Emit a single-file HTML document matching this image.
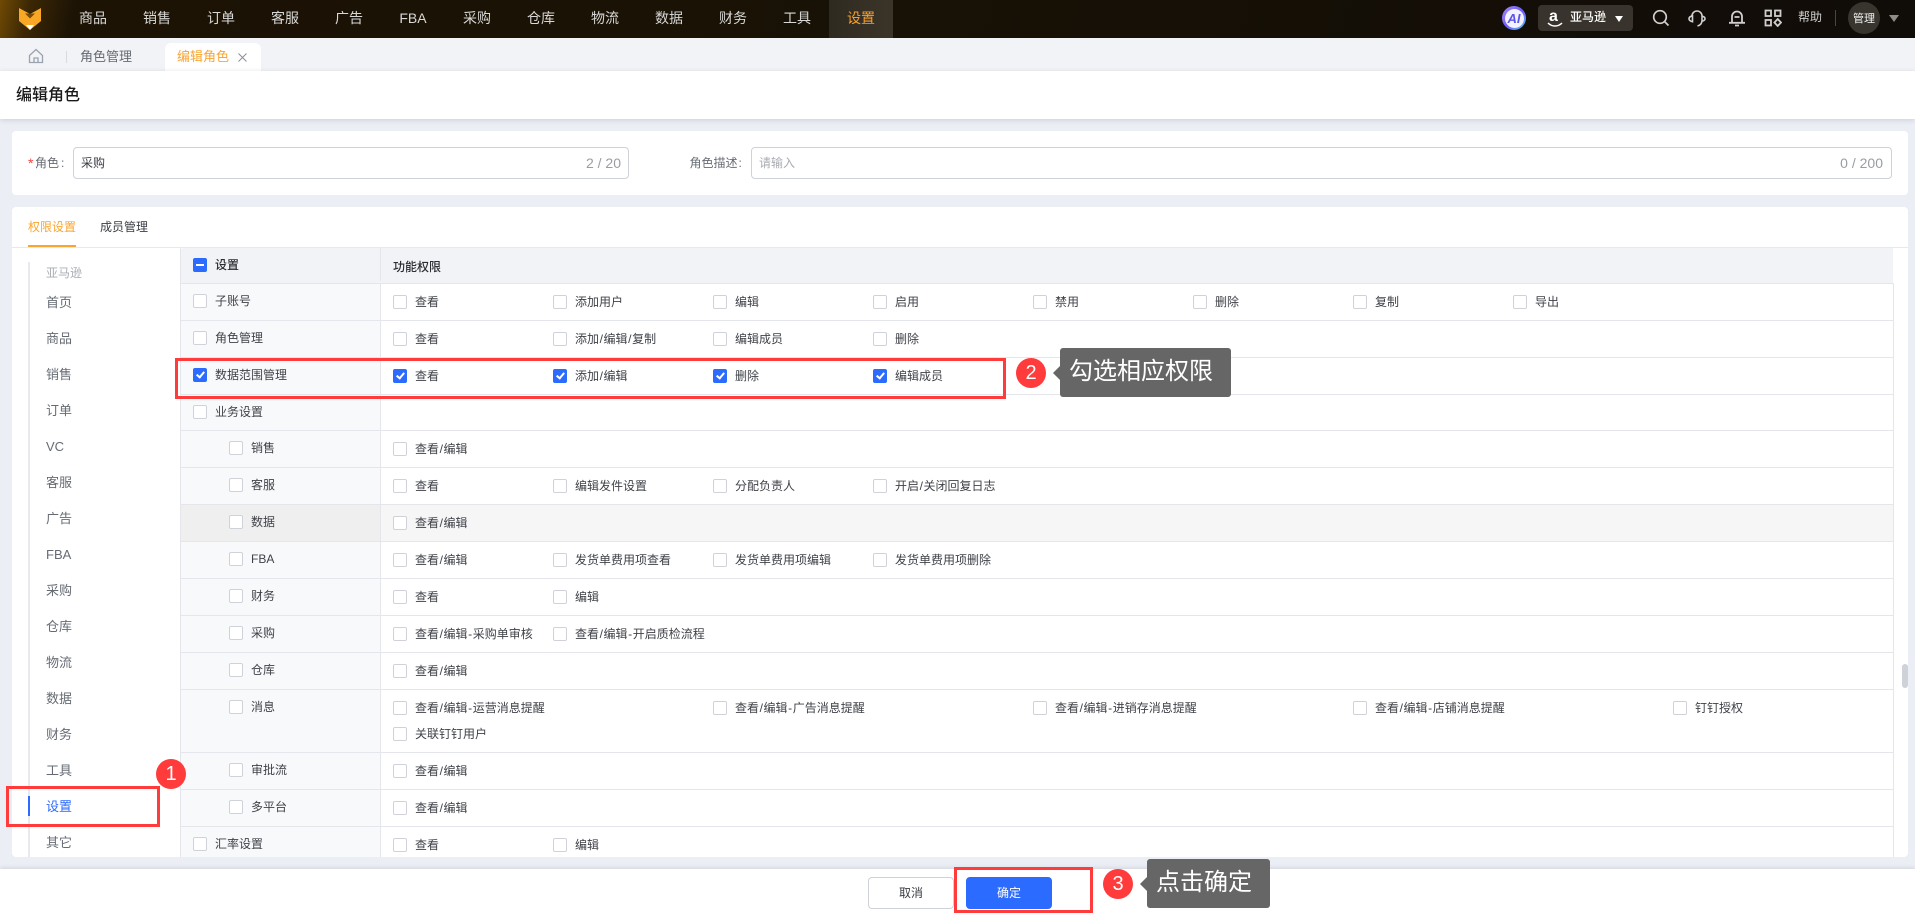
<!DOCTYPE html>
<html lang="zh">
<head>
<meta charset="utf-8">
<title>编辑角色</title>
<style>
html,body{margin:0;padding:0}
body{width:1915px;height:915px;position:relative;overflow:hidden;background:#eceef5;font-family:"Liberation Sans","Noto Sans CJK SC",sans-serif;font-size:12px;color:#3a3d44}
div,span,b,label,i,svg{position:absolute}
s{text-decoration:none;padding:0 .6px}
.t{white-space:nowrap;line-height:16px}
.h{left:0;top:0;width:1915px;height:38px;background:linear-gradient(102deg,#704a04 0,#3b2705 30px,#1c1305 75px,#181105 900px,#100c08 100%)}
.n{top:0;width:64px;height:38px;line-height:36px;text-align:center;color:#d8d8d6;font-size:14px}
.w{background:#fff}
.l{height:1px;left:180px;width:1713px;background:#e5e6ec}
.v{width:1px;background:#e5e6ec}
.s{left:46px;margin-top:1px;font-size:13px;color:#666b73;white-space:nowrap;line-height:16px}
.i{white-space:nowrap;line-height:14px;padding-left:22px;height:14px;color:#3f4248;font-size:12px}
.i i{left:0;top:0;width:12px;height:12px;border:1px solid #cfd2d8;border-radius:2px;background:#fff}
.k i{background:#2b6bff;border-color:#2b6bff}
.k i:after{content:"";position:absolute;left:3.5px;top:1px;width:3px;height:6px;border:solid #fff;border-width:0 2px 2px 0;transform:rotate(40deg)}
.r{border:3px solid #ff3b3b;box-sizing:border-box;z-index:5}
.b{width:30px;height:30px;border-radius:50%;background:#ff3b3b;color:#fff;text-align:center;line-height:30px;font-size:20px;z-index:6}
.p{height:49px;background:#666;border-radius:3px;color:#fff;font-size:24px;line-height:48px;z-index:6;white-space:nowrap;box-sizing:border-box}
.p:before{content:"";position:absolute;left:-7px;top:18px;border:7px solid transparent;border-left:0;border-right-color:#666}
</style>
</head>
<body>
<div class="h"></div>
<svg style="left:0;top:0" width="60" height="38" viewBox="0 0 60 38"><path d="M19 8L30 14L41 8V21L30 30L19 21Z" fill="#f9a825"/><path d="M25 13.5H35L30 18.5Z" fill="#7a4a08"/><path d="M26 25H34L30 30Z" fill="#fff"/></svg>
<div class="n" style="left:61px">商品</div>
<div class="n" style="left:125px">销售</div>
<div class="n" style="left:189px">订单</div>
<div class="n" style="left:253px">客服</div>
<div class="n" style="left:317px">广告</div>
<div class="n" style="left:381px">FBA</div>
<div class="n" style="left:445px">采购</div>
<div class="n" style="left:509px">仓库</div>
<div class="n" style="left:573px">物流</div>
<div class="n" style="left:637px">数据</div>
<div class="n" style="left:701px">财务</div>
<div class="n" style="left:765px">工具</div>
<div class="n" style="left:829px;background:linear-gradient(90deg,#2f2a20,#3b3429);color:#f9a02b">设置</div>

<div style="left:1502px;top:6px;width:24px;height:24px;border-radius:50%;background:linear-gradient(135deg,#a78bfa,#6d5cf5 50%,#58c8f5);"></div>
<div style="left:1504.5px;top:8.5px;width:19px;height:19px;border-radius:50%;background:#f4f2ff"></div>
<b style="left:1504.5px;top:8.5px;width:19px;text-align:center;line-height:19px;font-size:13px;font-style:italic;color:#5a55ea">AI</b>
<div style="left:1538px;top:5px;width:95px;height:26px;border-radius:4px;background:#38332c"></div>
<b style="left:1549px;top:7px;font-size:16px;line-height:20px;color:#fff;font-family:'Liberation Sans',sans-serif">a</b>
<svg style="left:1547px;top:22px" width="16" height="6" viewBox="0 0 16 6"><path d="M1 1C5 5 11 5 15 1" fill="none" stroke="#fff" stroke-width="1.5"/></svg>
<div class="t" style="left:1570px;top:9px;color:#fff;font-size:12px;font-weight:500">亚马逊</div>
<svg style="left:1615px;top:16px" width="8" height="6"><path d="M0 0H8L4 6Z" fill="#fff"/></svg>
<svg style="left:1652px;top:9px" width="18" height="18" viewBox="0 0 18 18" fill="none" stroke="#cfcfcf" stroke-width="1.700"><circle cx="8" cy="8" r="6.300"/><path d="M12.500 12.500L16.500 16.500"/></svg>
<svg style="left:1688px;top:9px" width="18" height="18" viewBox="0 0 18 18" fill="none" stroke="#cfcfcf" stroke-width="1.600"><path d="M4 7A5 5 0 0 1 14 7V11.500C14 14.500 12.500 16.200 9.500 17"/><path d="M4.500 6.800C2.500 7.300 1 8.300 1 9.700S2.500 12.200 4.500 12.700Z"/><path d="M14 7.200C16 7.600 17 8.500 17 9.700S16 11.700 14 12.100"/></svg>
<svg style="left:1728px;top:9px" width="18" height="19" viewBox="0 0 18 19" fill="none" stroke="#cfcfcf" stroke-width="1.800"><path d="M4 13V7.500A5 5 0 0 1 14 7.500V13M1 13.800H17M6.500 8H11.500M7 16.500H11"/></svg>
<svg style="left:1764px;top:9px" width="18" height="18" viewBox="0 0 18 18" fill="none" stroke="#cfcfcf" stroke-width="1.800"><rect x="1.500" y="1.500" width="5.500" height="5.500"/><rect x="11" y="1.500" width="5.500" height="5.500"/><rect x="1.500" y="11" width="5.500" height="5.500"/><path d="M13.700 10L17 13.500L13.700 17L10.400 13.500Z"/></svg>
<div class="t" style="left:1798px;top:9px;color:#cfcfcf;font-size:12px">帮助</div>
<div style="left:1835px;top:10px;width:1px;height:16px;background:#4a463f"></div>
<div style="left:1848px;top:2px;width:32px;height:32px;border-radius:50%;background:#38352f"></div>
<div class="t" style="left:1853px;top:11px;color:#f2f2f2;font-size:11px">管理</div>
<svg style="left:1889px;top:15px" width="10" height="7"><path d="M0 0H10L5 7Z" fill="#8f8c86"/></svg>

<div style="left:0;top:38px;width:1915px;height:33px;background:#f2f3f7"></div>
<svg style="left:28px;top:48px" width="16" height="16" viewBox="0 0 16 16" fill="none" stroke="#9aa2ae" stroke-width="1.300"><path d="M1.500 7.500L8 1.500L14.500 7.500V14.500H1.500ZM6 14.500V10H10V14.500"/></svg>
<div style="left:66px;top:51px;width:1px;height:12px;background:#d8dae0"></div>
<div class="t" style="left:80px;top:49px;font-size:13px;color:#666b73">角色管理</div>
<div class="w" style="left:165px;top:43px;width:96px;height:28px;border-radius:6px 6px 0 0"></div>
<div class="t" style="left:177px;top:49px;font-size:13px;color:#f9a531">编辑角色</div>
<svg style="left:238px;top:53px" width="9" height="9" fill="none" stroke="#8a8f99" stroke-width="1"><path d="M.5 .5L8.500 8.500M8.500 .5L.5 8.500"/></svg>

<div class="w" style="left:0;top:71px;width:1915px;height:48px;box-shadow:0 1px 5px rgba(60,60,90,.18)"></div>
<div class="t" style="left:16px;top:87px;font-size:16px;line-height:18px;color:#1a1a1a;font-weight:500">编辑角色</div>

<div class="w" style="left:12px;top:131px;width:1896px;height:64px;border-radius:4px"></div>
<div class="t" style="left:28px;top:155px;color:#ff3b3b;font-size:14px">*</div>
<div class="t" style="left:35px;top:155px;color:#666b73">角色</div>
<div class="t" style="left:61px;top:155px;color:#666b73">:</div>
<div class="w" style="left:73px;top:147px;width:556px;height:32px;box-sizing:border-box;border:1px solid #cfd2d8;border-radius:4px"></div>
<div class="t" style="left:81px;top:155px;color:#3a3d44">采购</div>
<div class="t" style="right:1294px;top:155px;color:#9a9da3;font-size:14px">2 / 20</div>
<div class="t" style="left:689.500px;top:155px;color:#666b73">角色描述<s style="padding:0 0 0 1px">:</s></div>
<div class="w" style="left:751px;top:147px;width:1141px;height:32px;box-sizing:border-box;border:1px solid #cfd2d8;border-radius:4px"></div>
<div class="t" style="left:759px;top:155px;color:#a8abb1">请输入</div>
<div class="t" style="right:32px;top:155px;color:#9a9da3;font-size:14px">0 / 200</div>

<div class="w" style="left:12px;top:207px;width:1896px;height:650px;border-radius:4px"></div>
<div class="t" style="left:28px;top:219px;color:#f9a531">权限设置</div>
<div class="t" style="left:100px;top:219px;color:#3a3d44">成员管理</div>
<div style="left:12px;top:247px;width:1896px;height:1px;background:#e8e9ee"></div>
<div style="left:28px;top:245px;width:48px;height:2px;background:#f9a531"></div>

<div style="left:28px;top:262px;width:2px;height:595px;background:#e8e9ee"></div>
<div style="left:28px;top:796px;width:2px;height:20px;background:#2b6bff"></div>
<div class="t" style="left:46px;top:265px;color:#aaadb3">亚马逊</div>
<div class="s" style="top:294px">首页</div>
<div class="s" style="top:330px">商品</div>
<div class="s" style="top:366px">销售</div>
<div class="s" style="top:402px">订单</div>
<div class="s" style="top:438px">VC</div>
<div class="s" style="top:474px">客服</div>
<div class="s" style="top:510px">广告</div>
<div class="s" style="top:546px">FBA</div>
<div class="s" style="top:582px">采购</div>
<div class="s" style="top:618px">仓库</div>
<div class="s" style="top:654px">物流</div>
<div class="s" style="top:690px">数据</div>
<div class="s" style="top:726px">财务</div>
<div class="s" style="top:762px">工具</div>
<div class="s" style="top:798px;color:#2b6bff">设置</div>
<div class="s" style="top:834px">其它</div>

<div style="left:180px;top:248px;width:200px;height:609px;background:#f8f9fb;border-radius:4px 0 0 0"></div>
<div style="left:180px;top:248px;width:1713px;height:35px;background:#f2f3f7;border-radius:4px 0 0 0"></div>
<div style="left:180px;top:504px;width:200px;height:37px;background:#efefef"></div>
<div style="left:381px;top:504px;width:1512px;height:37px;background:#f6f6f6"></div>
<div class="v" style="left:180px;top:248px;height:609px"></div>
<div class="v" style="left:380px;top:248px;height:33px"></div>
<div class="v" style="left:380px;top:283px;height:574px"></div>
<div class="v" style="left:1893px;top:283px;height:574px"></div>
<div class="l" style="top:283px"></div>
<div class="l" style="top:320px"></div>
<div class="l" style="top:357px"></div>
<div class="l" style="top:394px"></div>
<div class="l" style="top:430px"></div>
<div class="l" style="top:467px"></div>
<div class="l" style="top:504px"></div>
<div class="l" style="top:541px"></div>
<div class="l" style="top:578px"></div>
<div class="l" style="top:615px"></div>
<div class="l" style="top:652px"></div>
<div class="l" style="top:689px"></div>
<div class="l" style="top:752px"></div>
<div class="l" style="top:789px"></div>
<div class="l" style="top:826px"></div>
<div style="left:1902px;top:664px;width:6px;height:24px;border-radius:3px;background:#cfd2d8"></div>

<label class="i" style="left:193px;top:258px;font-weight:500;color:#2a2c31"><i style="background:#2b6bff;border-color:#2b6bff"></i><b style="left:3px;top:6px;width:8px;height:2px;background:#fff"></b>设置</label>
<div class="t" style="left:393px;top:259px;font-weight:500;color:#2a2c31">功能权限</div>

<label class="i" style="left:193px;top:294px"><i></i>子账号</label>
<label class="i" style="left:393px;top:295px"><i></i>查看</label>
<label class="i" style="left:553px;top:295px"><i></i>添加用户</label>
<label class="i" style="left:713px;top:295px"><i></i>编辑</label>
<label class="i" style="left:873px;top:295px"><i></i>启用</label>
<label class="i" style="left:1033px;top:295px"><i></i>禁用</label>
<label class="i" style="left:1193px;top:295px"><i></i>删除</label>
<label class="i" style="left:1353px;top:295px"><i></i>复制</label>
<label class="i" style="left:1513px;top:295px"><i></i>导出</label>

<label class="i" style="left:193px;top:331px"><i></i>角色管理</label>
<label class="i" style="left:393px;top:332px"><i></i>查看</label>
<label class="i" style="left:553px;top:332px"><i></i>添加<s>/</s>编辑<s>/</s>复制</label>
<label class="i" style="left:713px;top:332px"><i></i>编辑成员</label>
<label class="i" style="left:873px;top:332px"><i></i>删除</label>

<label class="i k" style="left:193px;top:368px"><i></i>数据范围管理</label>
<label class="i k" style="left:393px;top:369px"><i></i>查看</label>
<label class="i k" style="left:553px;top:369px"><i></i>添加<s>/</s>编辑</label>
<label class="i k" style="left:713px;top:369px"><i></i>删除</label>
<label class="i k" style="left:873px;top:369px"><i></i>编辑成员</label>

<label class="i" style="left:193px;top:405px"><i></i>业务设置</label>

<label class="i" style="left:229px;top:441px"><i></i>销售</label>
<label class="i" style="left:393px;top:442px"><i></i>查看<s>/</s>编辑</label>

<label class="i" style="left:229px;top:478px"><i></i>客服</label>
<label class="i" style="left:393px;top:479px"><i></i>查看</label>
<label class="i" style="left:553px;top:479px"><i></i>编辑发件设置</label>
<label class="i" style="left:713px;top:479px"><i></i>分配负责人</label>
<label class="i" style="left:873px;top:479px"><i></i>开启<s>/</s>关闭回复日志</label>

<label class="i" style="left:229px;top:515px"><i></i>数据</label>
<label class="i" style="left:393px;top:516px"><i></i>查看<s>/</s>编辑</label>

<label class="i" style="left:229px;top:552px"><i></i>FBA</label>
<label class="i" style="left:393px;top:553px"><i></i>查看<s>/</s>编辑</label>
<label class="i" style="left:553px;top:553px"><i></i>发货单费用项查看</label>
<label class="i" style="left:713px;top:553px"><i></i>发货单费用项编辑</label>
<label class="i" style="left:873px;top:553px"><i></i>发货单费用项删除</label>

<label class="i" style="left:229px;top:589px"><i></i>财务</label>
<label class="i" style="left:393px;top:590px"><i></i>查看</label>
<label class="i" style="left:553px;top:590px"><i></i>编辑</label>

<label class="i" style="left:229px;top:626px"><i></i>采购</label>
<label class="i" style="left:393px;top:627px"><i></i>查看<s>/</s>编辑<s>-</s>采购单审核</label>
<label class="i" style="left:553px;top:627px"><i></i>查看<s>/</s>编辑<s>-</s>开启质检流程</label>

<label class="i" style="left:229px;top:663px"><i></i>仓库</label>
<label class="i" style="left:393px;top:664px"><i></i>查看<s>/</s>编辑</label>

<label class="i" style="left:229px;top:700px"><i></i>消息</label>
<label class="i" style="left:393px;top:701px"><i></i>查看<s>/</s>编辑<s>-</s>运营消息提醒</label>
<label class="i" style="left:713px;top:701px"><i></i>查看<s>/</s>编辑<s>-</s>广告消息提醒</label>
<label class="i" style="left:1033px;top:701px"><i></i>查看<s>/</s>编辑<s>-</s>进销存消息提醒</label>
<label class="i" style="left:1353px;top:701px"><i></i>查看<s>/</s>编辑<s>-</s>店铺消息提醒</label>
<label class="i" style="left:1673px;top:701px"><i></i>钉钉授权</label>
<label class="i" style="left:393px;top:727px"><i></i>关联钉钉用户</label>

<label class="i" style="left:229px;top:763px"><i></i>审批流</label>
<label class="i" style="left:393px;top:764px"><i></i>查看<s>/</s>编辑</label>

<label class="i" style="left:229px;top:800px"><i></i>多平台</label>
<label class="i" style="left:393px;top:801px"><i></i>查看<s>/</s>编辑</label>

<label class="i" style="left:193px;top:837px"><i></i>汇率设置</label>
<label class="i" style="left:393px;top:838px"><i></i>查看</label>
<label class="i" style="left:553px;top:838px"><i></i>编辑</label>

<div class="w" style="left:0;top:869px;width:1915px;height:46px;box-shadow:0 -1px 4px rgba(60,60,90,.15)"></div>
<div class="w" style="left:868px;top:877px;width:86px;height:32px;box-sizing:border-box;border:1px solid #cfd2d8;border-radius:4px;text-align:center;line-height:30px;color:#3a3d44">取消</div>
<div style="left:966px;top:877px;width:86px;height:32px;background:#2b6bff;border-radius:4px;text-align:center;line-height:32px;color:#fff">确定</div>

<div class="r" style="left:175px;top:358px;width:831px;height:41px"></div>
<div class="r" style="left:6px;top:786px;width:154px;height:41px"></div>
<div class="r" style="left:954px;top:867px;width:139px;height:46px"></div>
<div class="b" style="left:156px;top:759px">1</div>
<div class="b" style="left:1016px;top:358px">2</div>
<div class="b" style="left:1103px;top:869px">3</div>
<div class="p" style="left:1060px;top:348px;width:171px;padding-left:9px">勾选相应权限</div>
<div class="p" style="left:1147px;top:859px;width:123px;padding-left:9px">点击确定</div>
</body>
</html>
